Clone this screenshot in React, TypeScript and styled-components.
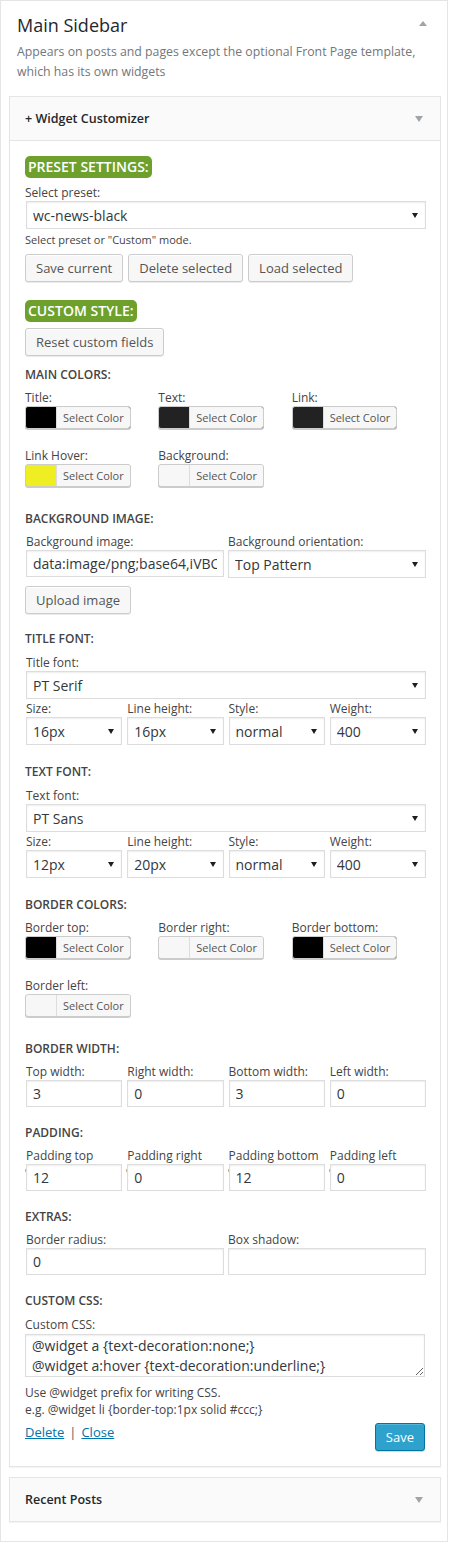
import React from "react";
import styled, { createGlobalStyle } from "styled-components";

const GlobalStyle = createGlobalStyle`
  *, *::before, *::after { box-sizing: border-box; }
  html, body { margin: 0; padding: 0; background: #fff; }
  body {
    font-family: "Open Sans", "Noto Sans", sans-serif;
    font-size: 13px;
    color: #444;
  }
`;

const Sidebar = styled.div`
  width: 448px;
  border: 1px solid #e5e5e5;
  padding-bottom: 19px;
  background: #fff;
`;

const SidebarHead = styled.div`
  display: flex;
  align-items: center;
  justify-content: space-between;
  padding: 12px 20px 0 16px;
`;

const SidebarTitle = styled.h2`
  margin: 0;
  font-size: 18px;
  font-weight: 400;
  line-height: 24px;
  color: #23282d;
`;

const Arrow = styled.span<{ $dir: "up" | "down" }>`
  width: 0;
  height: 0;
  border-left: 4px solid transparent;
  border-right: 4px solid transparent;
  ${(p) =>
    p.$dir === "up"
      ? "border-bottom: 5px solid #a0a5aa; margin-top: -3px;"
      : "border-top: 6px solid #a0a5aa; margin-top: 1px;"}
`;

const SidebarDesc = styled.p`
  margin: 5px 6px 0 16px;
  font-size: 12.3px;
  line-height: 19.5px;
  color: #72777c;
`;

const WidgetBox = styled.div<{ $mt: number }>`
  margin: ${(p) => p.$mt}px 6px 0 8px;
  border: 1px solid #e5e5e5;
  box-shadow: 0 1px 1px rgba(0, 0, 0, 0.04);
  background: #fff;
`;

const WidgetTop = styled.div<{ $open?: boolean }>`
  display: flex;
  align-items: center;
  justify-content: space-between;
  height: ${(p) => (p.$open ? 44 : 43)}px;
  padding: 0 17px 0 15px;
  background: #fafafa;
  ${(p) => (p.$open ? "border-bottom: 1px solid #e5e5e5;" : "")}
`;

const WidgetTitle = styled.h3`
  margin: 0;
  font-size: 12.5px;
  font-weight: 600;
  line-height: 18px;
  color: #23282d;
`;

const WidgetInside = styled.div`
  display: flex;
  flex-direction: column;
  align-items: stretch;
  padding: 15px;
`;

const Badge = styled.div<{ $mt?: number }>`
  width: fit-content;
  margin-top: ${(p) => p.$mt ?? 0}px;
  padding: 0 3px;
  border-radius: 5px;
  background: #6ea12b;
  color: #fff;
  font-size: 14px;
  font-weight: 600;
  line-height: 22px;
`;

const SectionTitle = styled.h4<{ $mt: number }>`
  margin: ${(p) => p.$mt}px 0 5px;
  font-size: 12px;
  font-weight: 600;
  line-height: 18px;
  text-transform: uppercase;
  color: #444;
`;

const Label = styled.label<{ $mt?: number }>`
  display: block;
  margin-top: ${(p) => p.$mt ?? 0}px;
  font-size: 12px;
  line-height: 17px;
  color: #444;
  white-space: nowrap;
`;

const Hint = styled.p<{ $mt?: number; $small?: boolean }>`
  margin: ${(p) => p.$mt ?? 0}px 0 0;
  font-size: ${(p) => (p.$small ? 11 : 12)}px;
  line-height: 17px;
  color: #444;
`;

const ButtonRow = styled.div<{ $mt: number }>`
  display: flex;
  gap: 5px;
  margin-top: ${(p) => p.$mt}px;
`;

const Button = styled.button`
  height: 28px;
  margin: 0;
  padding: 0 10px 1px;
  border: 1px solid #ccc;
  border-radius: 3px;
  background: #f7f7f7;
  box-shadow: inset 0 1px 0 #fff, 0 1px 0 rgba(0, 0, 0, 0.08);
  color: #555;
  font-family: inherit;
  font-size: 13px;
  line-height: 26px;
  white-space: nowrap;
  cursor: pointer;
`;

const PrimaryButton = styled(Button)`
  background: #2ea2cc;
  border-color: #0074a2;
  box-shadow: inset 0 1px 0 rgba(120, 200, 230, 0.5), 0 1px 0 rgba(0, 0, 0, 0.15);
  color: #fff;
`;

const ColorGrid = styled.div`
  display: grid;
  grid-template-columns: repeat(3, 1fr);
  row-gap: 18px;
  margin-bottom: 6px;
`;

const ColorButton = styled.div<{ $swatch: string }>`
  display: flex;
  width: fit-content;
  height: 23px;
  padding-left: 30px;
  border: 1px solid #ccc;
  border-radius: 3px;
  background: ${(p) => p.$swatch};
  box-shadow: 0 1px 0 #ccc;
  overflow: hidden;
`;

const ColorText = styled.span`
  padding: 0 6px;
  border-left: 1px solid #ddd;
  background: #f7f7f7;
  color: #555;
  font-size: 11px;
  line-height: 21px;
  white-space: nowrap;
`;

const FieldRow = styled.div<{ $cols: number; $mt?: number }>`
  display: grid;
  grid-template-columns: repeat(${(p) => p.$cols}, minmax(0, 1fr));
  column-gap: ${(p) => (p.$cols === 4 ? 5 : 4)}px;
  width: 400px;
  margin: ${(p) => p.$mt ?? 0}px 0 0 1px;
`;

const Cell = styled.div<{ $tick?: boolean }>`
  position: relative;
  min-width: 0;
  ${(p) =>
    p.$tick
      ? `&::before {
          content: "";
          position: absolute;
          left: -1px;
          top: 22px;
          width: 1px;
          height: 3px;
          background: #d2b27f;
        }`
      : ""}
`;

const fieldBase = `
  display: block;
  width: 100%;
  margin: 0;
  border: 1px solid #ddd;
  border-radius: 0;
  background: #fff;
  box-shadow: inset 0 1px 2px rgba(0, 0, 0, 0.07);
  color: #32373c;
  font-family: "Open Sans", "Noto Sans", sans-serif;
  font-size: 14px;
  outline: none;
`;

const TextInput = styled.input`
  ${fieldBase}
  height: 27px;
  padding: 0 6px;
`;

const SelectWrap = styled.div`
  position: relative;
  &::after {
    content: "";
    position: absolute;
    right: 8px;
    top: 12px;
    width: 0;
    height: 0;
    border-left: 3px solid transparent;
    border-right: 3px solid transparent;
    border-top: 5px solid #1e1e1e;
    pointer-events: none;
  }
`;

const Select = styled.select`
  ${fieldBase}
  height: 28px;
  padding: 0 22px 0 6px;
  appearance: none;
  -webkit-appearance: none;
`;

const TextArea = styled.textarea`
  ${fieldBase}
  width: 400px;
  height: 43px;
  margin-top: 1px;
  padding: 1px 6px;
  line-height: 20px;
  overflow: hidden;
  resize: both;
`;

const Footer = styled.div`
  display: flex;
  justify-content: space-between;
  align-items: flex-start;
  margin-top: 5px;
`;

const Links = styled.div`
  font-size: 13px;
  line-height: 18px;
  color: #555;
`;

const Link = styled.a`
  color: #0073aa;
  text-decoration: underline;
`;

const Sep = styled.span`
  margin: 0 5px;
`;

function SelectField({ label, value }: { label: string; value: string }) {
  return (
    <Cell>
      <Label>{label}</Label>
      <SelectWrap>
        <Select defaultValue={value}>
          <option>{value}</option>
        </Select>
      </SelectWrap>
    </Cell>
  );
}

function InputField({ label, value, tick }: { label: string; value: string; tick?: boolean }) {
  return (
    <Cell $tick={tick}>
      <Label>{label}</Label>
      <TextInput type="text" defaultValue={value} readOnly />
    </Cell>
  );
}

function ColorField({ label, swatch }: { label: string; swatch: string }) {
  return (
    <div>
      <Label>{label}</Label>
      <ColorButton $swatch={swatch}>
        <ColorText>Select Color</ColorText>
      </ColorButton>
    </div>
  );
}

function FontSection({
  title,
  mt,
  fontLabel,
  font,
  size,
  lineHeight,
}: {
  title: string;
  mt: number;
  fontLabel: string;
  font: string;
  size: string;
  lineHeight: string;
}) {
  return (
    <>
      <SectionTitle $mt={mt}>{title}</SectionTitle>
      <FieldRow $cols={1} $mt={1}>
        <SelectField label={fontLabel} value={font} />
      </FieldRow>
      <FieldRow $cols={4} $mt={1}>
        <SelectField label="Size:" value={size} />
        <SelectField label="Line height:" value={lineHeight} />
        <SelectField label="Style:" value="normal" />
        <SelectField label="Weight:" value="400" />
      </FieldRow>
    </>
  );
}

export default function App() {
  return (
    <>
      <GlobalStyle />
      <Sidebar>
        <SidebarHead>
          <SidebarTitle>Main Sidebar</SidebarTitle>
          <Arrow $dir="up" />
        </SidebarHead>
        <SidebarDesc>
          Appears on posts and pages except the optional Front Page template, which has its own widgets
        </SidebarDesc>

        <WidgetBox $mt={15}>
          <WidgetTop $open>
            <WidgetTitle>+ Widget Customizer</WidgetTitle>
            <Arrow $dir="down" />
          </WidgetTop>
          <WidgetInside>
            <Badge>PRESET SETTINGS:</Badge>
            <Label $mt={6}>Select preset:</Label>
            <FieldRow $cols={1}>
              <SelectWrap>
                <Select defaultValue="wc-news-black">
                  <option>wc-news-black</option>
                </Select>
              </SelectWrap>
            </FieldRow>
            <Hint $mt={2} $small>
              Select preset or "Custom" mode.
            </Hint>
            <ButtonRow $mt={6}>
              <Button>Save current</Button>
              <Button>Delete selected</Button>
              <Button>Load selected</Button>
            </ButtonRow>

            <Badge $mt={18}>CUSTOM STYLE:</Badge>
            <ButtonRow $mt={6}>
              <Button>Reset custom fields</Button>
            </ButtonRow>

            <SectionTitle $mt={10}>Main colors:</SectionTitle>
            <ColorGrid>
              <ColorField label="Title:" swatch="#000000" />
              <ColorField label="Text:" swatch="#222222" />
              <ColorField label="Link:" swatch="#222222" />
              <ColorField label="Link Hover:" swatch="#eeee22" />
              <ColorField label="Background:" swatch="#f7f7f7" />
            </ColorGrid>

            <SectionTitle $mt={17}>Background image:</SectionTitle>
            <FieldRow $cols={2}>
              <InputField label="Background image:" value="data:image/png;base64,iVBORw0KGgoAAAANSUhEUg" />
              <SelectField label="Background orientation:" value="Top Pattern" />
            </FieldRow>
            <ButtonRow $mt={8}>
              <Button>Upload image</Button>
            </ButtonRow>

            <FontSection
              title="Title font:"
              mt={16}
              fontLabel="Title font:"
              font="PT Serif"
              size="16px"
              lineHeight="16px"
            />
            <FontSection
              title="Text font:"
              mt={18}
              fontLabel="Text font:"
              font="PT Sans"
              size="12px"
              lineHeight="20px"
            />

            <SectionTitle $mt={18}>Border colors:</SectionTitle>
            <ColorGrid>
              <ColorField label="Border top:" swatch="#000000" />
              <ColorField label="Border right:" swatch="#f7f7f7" />
              <ColorField label="Border bottom:" swatch="#000000" />
              <ColorField label="Border left:" swatch="#f7f7f7" />
            </ColorGrid>

            <SectionTitle $mt={17}>Border width:</SectionTitle>
            <FieldRow $cols={4}>
              <InputField label="Top width:" value="3" />
              <InputField label="Right width:" value="0" />
              <InputField label="Bottom width:" value="3" />
              <InputField label="Left width:" value="0" />
            </FieldRow>

            <SectionTitle $mt={17}>Padding:</SectionTitle>
            <FieldRow $cols={4}>
              <InputField label="Padding top" value="12" tick />
              <InputField label="Padding right" value="0" tick />
              <InputField label="Padding bottom" value="12" tick />
              <InputField label="Padding left" value="0" tick />
            </FieldRow>

            <SectionTitle $mt={17}>Extras:</SectionTitle>
            <FieldRow $cols={2}>
              <InputField label="Border radius:" value="0" />
              <InputField label="Box shadow:" value="" />
            </FieldRow>

            <SectionTitle $mt={17}>Custom CSS:</SectionTitle>
            <Label $mt={1}>Custom CSS:</Label>
            <TextArea
              readOnly
              defaultValue={"@widget a {text-decoration:none;}\n@widget a:hover {text-decoration:underline;}"}
            />
            <Hint $mt={7}>
              Use @widget prefix for writing CSS.
              <br />
              e.g. @widget li {"{border-top:1px solid #ccc;}"}
            </Hint>
            <Footer>
              <Links>
                <Link href="#">Delete</Link>
                <Sep>|</Sep>
                <Link href="#">Close</Link>
              </Links>
              <PrimaryButton>Save</PrimaryButton>
            </Footer>
          </WidgetInside>
        </WidgetBox>

        <WidgetBox $mt={10}>
          <WidgetTop>
            <WidgetTitle>Recent Posts</WidgetTitle>
            <Arrow $dir="down" />
          </WidgetTop>
        </WidgetBox>
      </Sidebar>
    </>
  );
}
